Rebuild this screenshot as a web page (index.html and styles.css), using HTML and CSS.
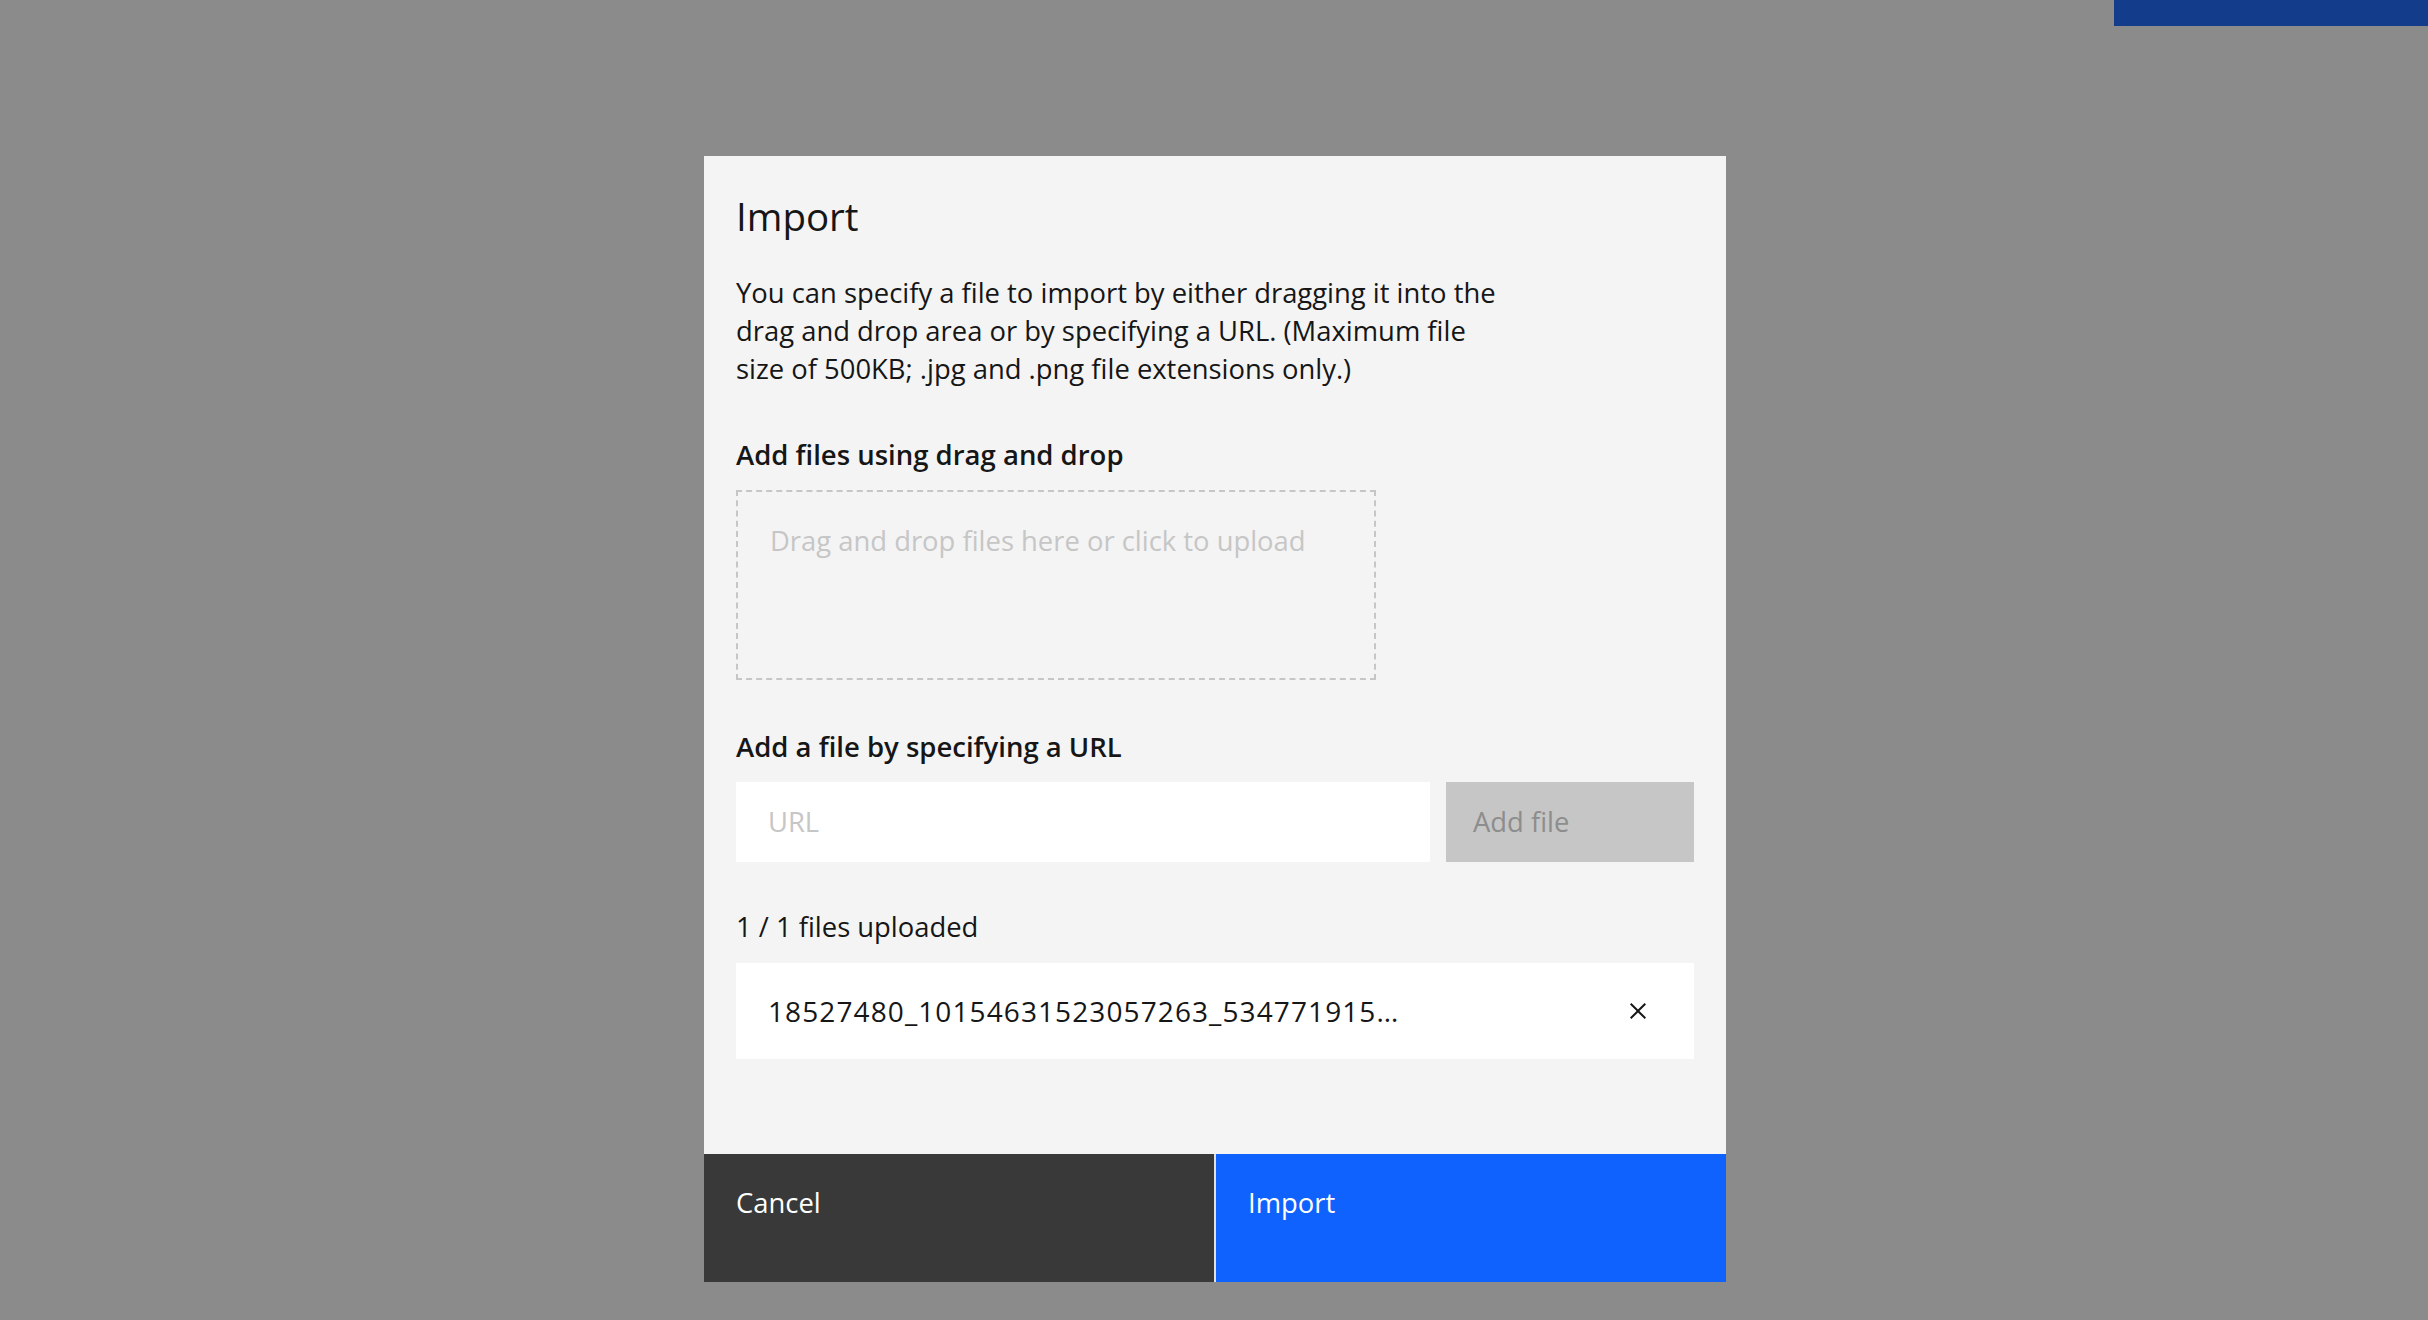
FILE: index.html
```html
<!DOCTYPE html>
<html lang="en">
<head>
<meta charset="utf-8">
<title>Import</title>
<link rel="stylesheet" href="styles.css">
</head>
<body>
<div class="topbar"><div class="topbar-btn"></div></div>
<div class="modal" role="dialog" aria-label="Import">
  <div class="modal-body">
    <h2 class="modal-title">Import</h2>
    <p class="modal-desc">You can specify a file to import by either dragging it into the<br>drag and drop area or by specifying a URL. (Maximum file<br>size of 500KB; .jpg and .png file extensions only.)</p>

    <div class="field-label label-drop">Add files using drag and drop</div>
    <div class="dropzone">Drag and drop files here or click to upload</div>

    <div class="field-label label-url">Add a file by specifying a URL</div>
    <div class="url-row">
      <div class="url-input">URL</div>
      <div class="add-btn">Add file</div>
    </div>

    <div class="upload-count">1 / 1 files uploaded</div>
    <div class="file-item">
      <span class="file-name">18527480_10154631523057263_534771915…</span>
      <svg class="file-close" width="32" height="32" viewBox="0 0 16 16" aria-hidden="true"><path d="M12 4.7L11.3 4 8 7.3 4.7 4 4 4.7 7.3 8 4 11.3 4.7 12 8 8.7 11.3 12 12 11.3 8.7 8z" fill="#161616"/></svg>
    </div>
  </div>
  <div class="modal-footer">
    <div class="btn btn-secondary">Cancel</div>
    <div class="btn btn-primary">Import</div>
  </div>
</div>
</body>
</html>
```
FILE: styles.css
```css
html, body {
  margin: 0;
  padding: 0;
}
body {
  background: #8b8b8b;
  font-family: "Open Sans", "Noto Sans", sans-serif;
  color: #161616;
  height: 1320px;
  overflow: hidden;
}
.topbar {
  display: flex;
  justify-content: flex-end;
  height: 26px;
}
.topbar-btn {
  width: 314px;
  background: #133c8a;
}
.modal {
  width: 1022px;
  margin: 130px 0 0 704px;
  background: #f4f4f4;
  display: flex;
  flex-direction: column;
}
.modal-body {
  padding: 36px 32px 95px 32px;
}
.modal-title {
  margin: 0;
  font-weight: 400;
  font-size: 38.5px;
  line-height: 48px;
}
.modal-desc {
  margin: 34px 0 0;
  font-size: 27.4px;
  line-height: 38px;
  white-space: nowrap;
}
.field-label {
  font-weight: 600;
  font-size: 27.5px;
  line-height: 36px;
}
.label-drop {
  margin-top: 49px;
}
.dropzone {
  margin-top: 17px;
  width: 640px;
  height: 190px;
  box-sizing: border-box;
  border: 2px dashed #c6c6c6;
  padding: 30px 32px 0;
  font-size: 27.4px;
  line-height: 38px;
  color: #c6c6c6;
}
.label-url {
  margin-top: 49px;
}
.url-row {
  margin-top: 17px;
  display: flex;
  gap: 16px;
  height: 80px;
}
.url-input {
  flex: 1;
  background: #ffffff;
  display: flex;
  align-items: center;
  padding: 0 32px;
  font-size: 27.4px;
  line-height: 38px;
  color: #c6c6c6;
}
.add-btn {
  width: 248px;
  box-sizing: border-box;
  background: #c6c6c6;
  color: #8d8d8d;
  display: flex;
  align-items: center;
  padding: 0 27px;
  font-size: 27.4px;
  line-height: 38px;
}
.upload-count {
  margin-top: 46px;
  font-size: 27.4px;
  line-height: 38px;
}
.file-item {
  margin-top: 17px;
  height: 96px;
  background: #ffffff;
  display: flex;
  align-items: center;
  justify-content: space-between;
  padding: 0 40px 0 32px;
}
.file-name {
  font-size: 28px;
  line-height: 38px;
  letter-spacing: 1.1px;
  white-space: nowrap;
}
.file-close {
  display: block;
}
.modal-footer {
  display: flex;
  gap: 2px;
  height: 128px;
  background: #e0e0e0;
}
.btn {
  flex: 1;
  color: #ffffff;
  font-size: 27.4px;
  line-height: 38px;
  padding: 30px 32px 0;
}
.btn-secondary {
  background: #393939;
}
.btn-primary {
  background: #0f62fe;
}
```
